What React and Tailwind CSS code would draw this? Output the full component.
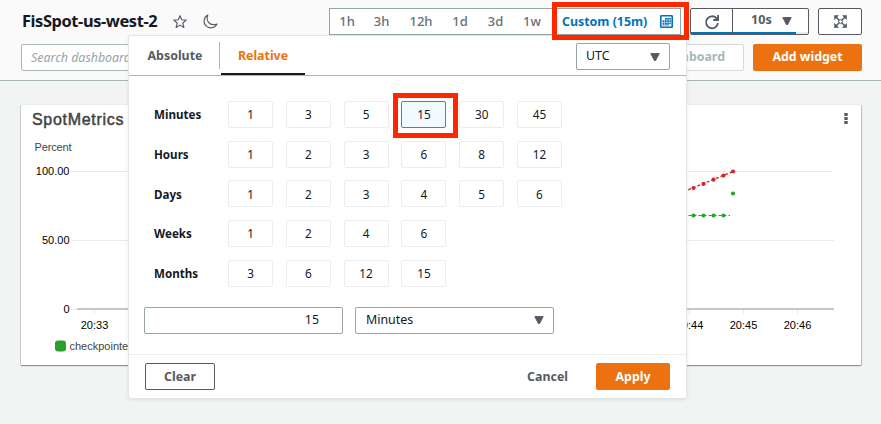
import React from "react";

const ROWS = [
  ["Minutes", [1, 3, 5, 15, 30, 45]],
  ["Hours", [1, 2, 3, 6, 8, 12]],
  ["Days", [1, 2, 3, 4, 5, 6]],
  ["Weeks", [1, 2, 4, 6]],
  ["Months", [3, 6, 12, 15]],
];

function Caret({ className = "" }) {
  return (
    <svg className={className} width="10" height="8" viewBox="0 0 10 8">
      <path d="M.8 .6h8.4L5.6 7.4a.6.6 0 0 1-1.2 0z" fill="#545b64" stroke="#545b64" strokeLinejoin="round" />
    </svg>
  );
}

function Header() {
  return (
    <header className="h-[81px] border-b border-[#aab7b8] bg-[#fafafa] pr-[19px] pl-[21px] pt-2">
      <div className="flex h-[27px] items-center">
        <h1 className="w-[137px] pl-px text-[16.4px] font-bold tracking-[-0.4px] whitespace-nowrap text-[#16191f]">FisSpot-us-west-2</h1>
        <svg className="ml-[14px]" width="16" height="16" viewBox="0 0 16 16" fill="none" stroke="#545b64" strokeWidth="1.1" strokeLinejoin="round">
          <path d="M8 1.600l1.700 4.200 4.500.3-3.400 2.900 1.100 4.500L8 11.100l-3.900 2.400 1.100-4.500L1.800 6.100l4.500-.3z" />
        </svg>
        <svg className="ml-[14px]" width="16" height="16" viewBox="0 0 16 16" fill="none" stroke="#545b64" strokeWidth="1.1" strokeLinejoin="round">
          <path d="M5.800 1A6.800 6.800 0 1 0 15 10C11 11.300 8.200 10.500 6.500 8.300 5 6.400 4.700 3.800 5.800 1z" />
        </svg>
        <div className="ml-auto flex h-[27px] w-[352px] items-center border border-[#95a5a6] bg-white text-[13px] font-medium text-[#687078]">
          <span className="w-[34px] text-center">1h</span>
          <span className="w-[35px] text-center">3h</span>
          <span className="w-[44px] text-center">12h</span>
          <span className="w-[34px] text-center">1d</span>
          <span className="w-[37px] text-center">3d</span>
          <span className="w-[36px] text-center">1w</span>
          <span className="ml-[12px] pt-px text-[12.4px] font-bold whitespace-nowrap text-[#0073bb]">Custom (15m)</span>
          <svg className="mr-[7px] ml-auto" width="13" height="13" viewBox="0 0 13 13">
            <rect x=".8" y=".8" width="11.400" height="11.400" rx=".4" fill="#fff" stroke="#0073bb" strokeWidth="1.600" />
            <path d="M5 3h1.800v1.800H5zM7.200 3h1.700v1.800H7.200zM9.300 3H10.800v1.800H9.300zM2.600 5.200h1.900V7H2.600zM5 5.200h1.800V7H5zM7.200 5.200h1.700V7H7.200zM9.300 5.200H10.800V7H9.300zM2.600 7.400h1.900v1.800H2.600zM5 7.400h1.800v1.800H5zM7.200 7.400h1.700v1.800H7.200zM9.300 7.400H10.800v1.800H9.300zM2.600 9.600h1.900v1H2.600zM5 9.600h1.800v1H5zM7.200 9.600h1.700v1H7.200z" fill="#0073bb" />
          </svg>
        </div>
        <div className="ml-[9px] flex h-[27px] w-[119px] rounded-[2px] border border-[#545b64] bg-white bg-linear-to-r from-[#0073bb] from-[105px] to-[#eaeded] to-[105px] bg-size-[100%_2px] bg-bottom bg-no-repeat">
          <div className="flex w-[42px] items-center justify-center border-r border-[#545b64]">
            <svg width="16" height="16" viewBox="0 0 16 16" fill="none" stroke="#545b64" strokeWidth="1.800">
              <path d="M14 9.200A6 6 0 1 1 12.300 4L14 5.600M14.100 1v5H9.200" />
            </svg>
          </div>
          <div className="flex flex-1 items-center pb-0.5 pl-[18px] text-[12.600px] font-bold text-[#545b64]">
            10s
            <Caret className="ml-[10px]" />
          </div>
        </div>
        <div className="ml-[9px] flex h-[27px] w-[44px] items-center justify-center rounded-[2px] border border-[#545b64] bg-white">
          <svg width="13" height="13" viewBox="0 0 13 13" fill="#545b64" stroke="#545b64">
            <path d="M.5.5h4l-4 4zM12.500.5v4l-4-4zM12.500 12.500h-4l4-4zM.5 12.500v-4l4 4z" strokeWidth=".6" />
            <path d="M2 2l9 9M11 2l-9 9" strokeWidth="1.500" />
            <path d="M6.500 4.300l2.200 2.200-2.200 2.200-2.200-2.200z" fill="#fff" strokeWidth="1" />
          </svg>
        </div>
      </div>
      <div className="mt-[9px] flex h-[27px] justify-between">
        <div className="flex w-[200px] items-center rounded-[2px] border border-[#aab7b8] bg-white pt-px pl-[9px] text-[12.400px] text-[#95a5a6] italic">
          Search dashboard
        </div>
        <div className="flex gap-[9px] text-[12.400px] font-bold">
          <div className="flex w-[124px] items-center justify-end rounded-[2px] border border-[#d5dbdb] bg-white pr-[18px] whitespace-nowrap text-[#aab7b8]">
            Save dashboard
          </div>
          <div className="flex w-[109px] items-center justify-center rounded-[2px] bg-[#ec7211] text-white">Add widget</div>
        </div>
      </div>
    </header>
  );
}

function Widget() {
  return (
    <section className="mt-6 mr-[20px] ml-[21px] h-[260px] bg-white shadow-[0_1px_1px_0_#879596,1px_0_1px_0_#c5cccc,-1px_0_0_0_#d0d6d6]">
      <svg width="840" height="260" viewBox="21 105 840 260" fontFamily="'Liberation Sans', Arial, sans-serif" fontSize="11">
        <text x="32" y="125" fontSize="16" fill="#444" stroke="#444" strokeWidth=".5" textLength="91.500">SpotMetrics</text>
        <text x="34.500" y="151" fill="#444" textLength="37">Percent</text>
        <g fill="#000" textAnchor="end">
          <text x="69.500" y="175">100.00</text>
          <text x="69.500" y="244">50.00</text>
          <text x="69.500" y="313">0</text>
        </g>
        <path d="M72 171.500H833M72 240.500H834M72 309.500h5M94.500 310v4M689.500 310v4M743.500 310v4M797.500 310v4" stroke="#eaeaea" />
        <path d="M77 309H834" stroke="#c6c6c6" strokeWidth="2" />
        <g fill="#000" textAnchor="middle">
          <text x="94.500" y="329">20:33</text>
          <text x="689.500" y="329">20:44</text>
          <text x="743.500" y="329">20:45</text>
          <text x="797.500" y="329">20:46</text>
        </g>
        <rect x="55" y="340.500" width="11" height="11" rx="3" fill="#2ca02c" />
        <text x="69.500" y="350" fill="#444">checkpointed</text>
        <path d="M683.500 191.700L733 171.500" stroke="#d62728" strokeWidth="1.300" strokeDasharray="3 2" />
        <path d="M683.500 215.500H730" stroke="#2ca02c" strokeWidth="1.200" strokeDasharray="3 2" />
        {[[693.5, 188], [703.5, 183.9], [713.5, 179.7], [723.5, 175.6], [733, 171.5]].map(([x, y]) => (
          <circle key={x} cx={x} cy={y} r="2.100" fill="#d62728" />
        ))}
        {[[693.5, 215.5], [703.5, 215.5], [713.5, 215.5], [723.5, 215.5], [733, 193.5]].map(([x, y]) => (
          <circle key={x} cx={x} cy={y} r="2.100" fill="#2ca02c" />
        ))}
        <path d="M844.300 113h3.400v3h-3.400zM844.300 117h3.400v3h-3.400zM844.300 121h3.400v3h-3.400z" fill="#545b64" />
      </svg>
    </section>
  );
}

function Picker() {
  return (
    <div className="absolute top-9 left-[129px] flex h-[362px] w-[557px] flex-col rounded-[2px] bg-white text-[12.400px] text-[#16191f] shadow-[0_0_0_1px_#e3e6e6,0_1px_4px_0_rgba(0,28,36,0.150)]">
      <div className="flex h-10 shrink-0 border-b border-[#aab7b8] font-bold">
        <div className="mt-1.5 flex h-[27px] w-[91px] items-center justify-center border-r border-[#aab7b8] pt-0.5 pl-0.5 text-[#545b64]">Absolute</div>
        <div className="ml-px flex w-[84px] items-center justify-center border-b-2 border-[#16191f] pt-[3px] text-[#ec7211]">Relative</div>
        <div className="mt-[7px] mr-4 ml-auto flex h-[27px] w-[94px] items-center justify-between rounded-[2px] border border-[#95a5a6] pr-[9px] pl-[9px] font-normal">
          UTC
          <Caret />
        </div>
      </div>
      <div className="mt-[25px] ml-[25px] flex flex-col gap-[12.700px]">
        {ROWS.map(([label, values]) => (
          <div key={label} className="flex h-[27px] items-center">
            <div className="w-[74px] pt-px text-[11.600px] font-bold">{label}</div>
            <div className="flex h-full gap-[12.800px]">
              {values.map((v) => (
                <div
                  key={v}
                  className={
                    "flex w-[45px] items-center justify-center rounded-[2px] border pt-px text-[11.800px] " +
                    (label === "Minutes" && v === 15 ? "border-[#00a1c9] bg-[#f1faff]" : "border-[#eaeded]")
                  }
                >
                  {v}
                </div>
              ))}
            </div>
          </div>
        ))}
      </div>
      <div className="mt-5 ml-[15px] flex h-[27px] gap-3">
        <div className="flex w-[199px] items-center justify-end rounded-[2px] border border-[#95a5a6] pt-px pr-[23px]">15</div>
        <div className="flex w-[199px] items-center justify-between rounded-[2px] border border-[#95a5a6] pr-[9px] pl-[10px]">
          Minutes
          <Caret />
        </div>
      </div>
      <div className="mt-auto flex h-11 items-center border-t border-[#eaeded] px-4 font-bold text-[#545b64]">
        <div className="flex h-[27px] w-[70px] items-center justify-center rounded-[2px] border border-[#545b64] pt-px">Clear</div>
        <div className="mr-[28px] ml-auto pt-px">Cancel</div>
        <div className="flex h-[27px] w-[74px] items-center justify-center rounded-[2px] bg-[#ec7211] pt-px text-white">Apply</div>
      </div>
    </div>
  );
}

export default function App() {
  return (
    <div className="relative h-[424px] w-[881px] overflow-hidden bg-[#f2f3f3] font-['Noto_Sans','Open_Sans',sans-serif]">
      <Header />
      <Widget />
      <Picker />
      <div className="absolute top-[2px] left-[552px] h-[38px] w-[137px] border-[5px] border-[#ff2600]" />
      <div className="absolute top-[93px] left-[393px] h-[45px] w-[65px] border-[5px] border-[#ff2600]" />
    </div>
  );
}
